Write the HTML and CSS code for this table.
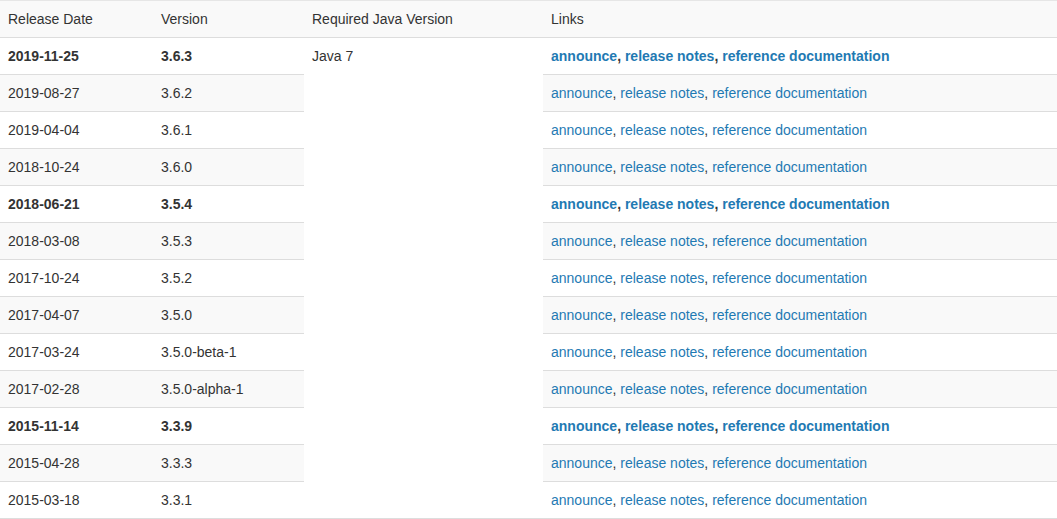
FILE: index.html
```html
<!DOCTYPE html>
<html lang="en">
<head>
<meta charset="UTF-8">
<meta name="viewport" content="width=device-width, initial-scale=1.0">
<title>Releases</title>
<link rel="stylesheet" href="styles.css">
</head>
<body>
	<table class="releases">
		<colgroup>
			<col class="col-date">
			<col class="col-version">
			<col class="col-java">
			<col class="col-links">
		</colgroup>
		<thead>
			<tr>
				<th>Release Date</th>
				<th>Version</th>
				<th>Required Java Version</th>
				<th>Links</th>
			</tr>
		</thead>
		<tbody>
			<tr class="current">
				<td>2019-11-25</td>
				<td>3.6.3</td>
				<td class="java" rowspan="13">Java 7</td>
				<td><a href="#">announce</a>, <a href="#">release notes</a>, <a href="#">reference documentation</a></td>
			</tr>
			<tr>
				<td>2019-08-27</td>
				<td>3.6.2</td>
				<td><a href="#">announce</a>, <a href="#">release notes</a>, <a href="#">reference documentation</a></td>
			</tr>
			<tr>
				<td>2019-04-04</td>
				<td>3.6.1</td>
				<td><a href="#">announce</a>, <a href="#">release notes</a>, <a href="#">reference documentation</a></td>
			</tr>
			<tr>
				<td>2018-10-24</td>
				<td>3.6.0</td>
				<td><a href="#">announce</a>, <a href="#">release notes</a>, <a href="#">reference documentation</a></td>
			</tr>
			<tr class="current">
				<td>2018-06-21</td>
				<td>3.5.4</td>
				<td><a href="#">announce</a>, <a href="#">release notes</a>, <a href="#">reference documentation</a></td>
			</tr>
			<tr>
				<td>2018-03-08</td>
				<td>3.5.3</td>
				<td><a href="#">announce</a>, <a href="#">release notes</a>, <a href="#">reference documentation</a></td>
			</tr>
			<tr>
				<td>2017-10-24</td>
				<td>3.5.2</td>
				<td><a href="#">announce</a>, <a href="#">release notes</a>, <a href="#">reference documentation</a></td>
			</tr>
			<tr>
				<td>2017-04-07</td>
				<td>3.5.0</td>
				<td><a href="#">announce</a>, <a href="#">release notes</a>, <a href="#">reference documentation</a></td>
			</tr>
			<tr>
				<td>2017-03-24</td>
				<td>3.5.0-beta-1</td>
				<td><a href="#">announce</a>, <a href="#">release notes</a>, <a href="#">reference documentation</a></td>
			</tr>
			<tr>
				<td>2017-02-28</td>
				<td>3.5.0-alpha-1</td>
				<td><a href="#">announce</a>, <a href="#">release notes</a>, <a href="#">reference documentation</a></td>
			</tr>
			<tr class="current">
				<td>2015-11-14</td>
				<td>3.3.9</td>
				<td><a href="#">announce</a>, <a href="#">release notes</a>, <a href="#">reference documentation</a></td>
			</tr>
			<tr>
				<td>2015-04-28</td>
				<td>3.3.3</td>
				<td><a href="#">announce</a>, <a href="#">release notes</a>, <a href="#">reference documentation</a></td>
			</tr>
			<tr>
				<td>2015-03-18</td>
				<td>3.3.1</td>
				<td><a href="#">announce</a>, <a href="#">release notes</a>, <a href="#">reference documentation</a></td>
			</tr>
		</tbody>
	</table>
</body>
</html>
```
FILE: styles.css
```css
html {
    margin: 0;
    padding: 0;
}

body {
    margin: 0;
    background-color: #fff;
    color: #333;
    font-family: "Liberation Sans", Arial, sans-serif;
    font-size: 14px;
    line-height: 20px;
}

.releases {
    width: 1057px;
    border-collapse: collapse;
    border-spacing: 0;
    table-layout: fixed;
    border-top: 1px solid #e6e6e6;
}

.col-date {
    width: 153px;
}

.col-version {
    width: 151px;
}

.col-java {
    width: 239px;
}

.releases th,
.releases td {
    padding: 8px;
    text-align: left;
    vertical-align: top;
    border-bottom: 1px solid #ddd;
}

.releases th {
    font-weight: normal;
    background-color: #f9f9f9;
}

.releases tbody tr:nth-child(even) {
    background-color: #f9f9f9;
}

.releases tr.current {
    font-weight: bold;
}

.releases td.java {
    background-color: #fff;
    font-weight: normal;
}

a {
    color: #1f7ab3;
    text-decoration: none;
}
```
